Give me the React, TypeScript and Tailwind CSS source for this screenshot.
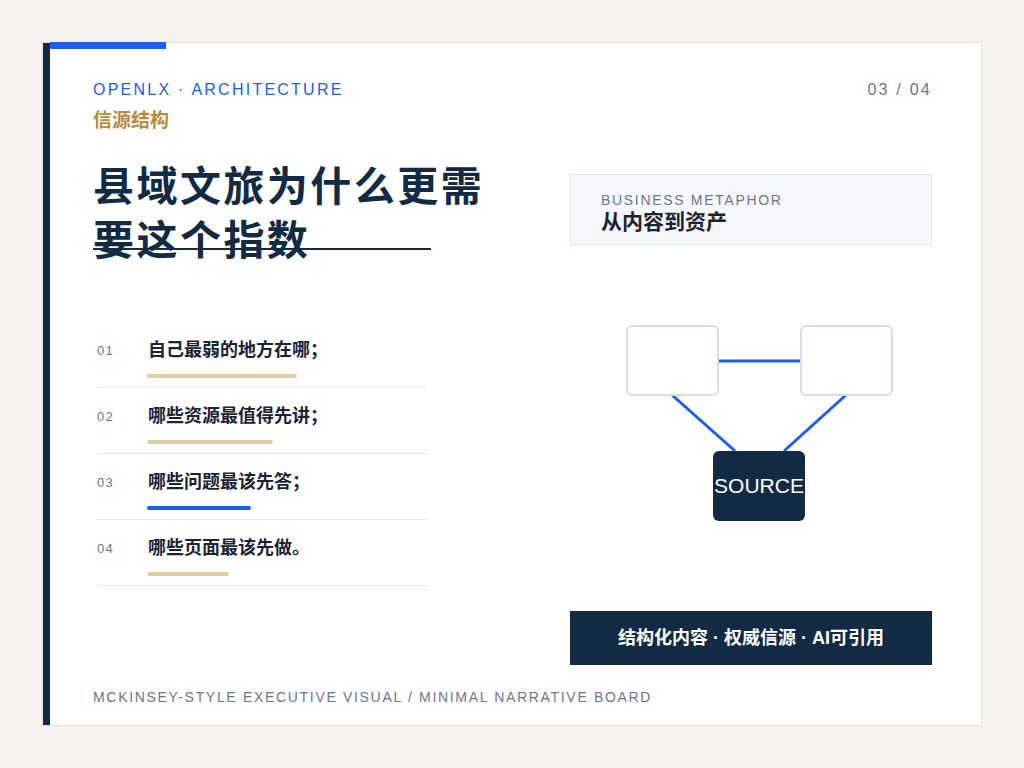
const items = [
  { n: "01", t: "自己最弱的地方在哪；", w: "w-[150px]", c: "bg-[#e0cc9f]" },
  { n: "02", t: "哪些资源最值得先讲；", w: "w-[126px]", c: "bg-[#e0cc9f]" },
  { n: "03", t: "哪些问题最该先答；", w: "w-[104px]", c: "bg-[#1a5eea]" },
  { n: "04", t: "哪些页面最该先做。", w: "w-[82px]", c: "bg-[#e0cc9f]" },
];

const App = () => {
  return (
    <div className="w-[1024px] h-[768px] bg-[#f6f3ee] p-[42px] font-[Liberation_Sans,Noto_Sans_CJK_SC,sans-serif]">
      <div className="relative w-[940px] h-[684px] bg-white border border-[#e6e2da] flex">
        <div className="w-[7px] bg-[#132a44] shrink-0" />
        <div className="absolute left-[7px] top-[-1px] w-[116px] h-[7px] bg-[#1a5eea]" />
        <div className="flex-1 flex flex-col pl-[43px] pr-[49px] pt-[37px]">
          <div className="flex justify-between text-[16px] tracking-[0.14em] leading-[20px]">
            <span className="text-[#1a5eea]">OPENLX · ARCHITECTURE</span>
            <span className="text-[#6b7789]">03 / 04</span>
          </div>
          <div className="flex">
            <div className="w-[338px]">
              <div className="mt-[8px] text-[19px] font-bold text-[#b98a3c] leading-[26px]">信源结构</div>
              <div className="relative mt-[26px] text-[41px] font-bold text-[#132a44] leading-[54px] tracking-[0.06em] whitespace-nowrap">
                县域文旅为什么更需<br />要这个指数
                <div className="absolute left-0 top-[88px] w-[338px] h-[2px] bg-[#132a44]" />
              </div>
              <div className="mt-[54px] w-[334px] pl-[4px]">
                {items.map((it) => (
                  <div key={it.n} className="h-[66px] border-b border-[#e5e7eb] pt-[15px]">
                    <div className="flex items-center">
                      <span className="w-[51px] text-[13px] text-[#6b7789] tracking-[0.1em]">{it.n}</span>
                      <span className="text-[18px] font-bold text-[#1a2233]">{it.t}</span>
                    </div>
                    <div className={`ml-[50px] mt-[10px] h-[4px] rounded-full ${it.w} ${it.c}`} />
                  </div>
                ))}
              </div>
            </div>
            <div className="ml-[139px] flex-1 flex flex-col">
              <div className="mt-[74px] h-[71px] bg-[#f6f7fb] border border-[#e3e6ee] pl-[30px] pt-[16px]">
                <div className="text-[14px] tracking-[0.12em] text-[#6b7789] leading-[18px]">BUSINESS METAPHOR</div>
                <div className="text-[21px] font-bold text-[#1a2233] leading-[26px]">从内容到资产</div>
              </div>
              <div className="relative h-[366px]">
                <svg className="absolute inset-0" width="361" height="366">
                  <line x1="148" y1="116" x2="230" y2="116" stroke="#1a5eea" strokeWidth="3" />
                  <line x1="102" y1="150" x2="165" y2="206" stroke="#1a5eea" strokeWidth="3" />
                  <line x1="276" y1="150" x2="214" y2="206" stroke="#1a5eea" strokeWidth="3" />
                </svg>
                <div className="absolute left-[56px] top-[80px] w-[93px] h-[71px] rounded-[6px] border-2 border-[#d9dde8] bg-white" />
                <div className="absolute left-[230px] top-[80px] w-[93px] h-[71px] rounded-[6px] border-2 border-[#d9dde8] bg-white" />
                <div className="absolute left-[143px] top-[206px] w-[92px] h-[70px] rounded-[6px] bg-[#132a44] flex items-center justify-center text-white text-[21px]">SOURCE</div>
              </div>
              <div className="h-[54px] bg-[#132a44] text-white text-[18px] font-bold flex items-center justify-center">结构化内容 · 权威信源 · AI可引用</div>
            </div>
          </div>
          <div className="mt-[22px] text-[14px] tracking-[0.12em] text-[#6b7789]">MCKINSEY-STYLE EXECUTIVE VISUAL / MINIMAL NARRATIVE BOARD</div>
        </div>
      </div>
    </div>
  );
};

export default App;
